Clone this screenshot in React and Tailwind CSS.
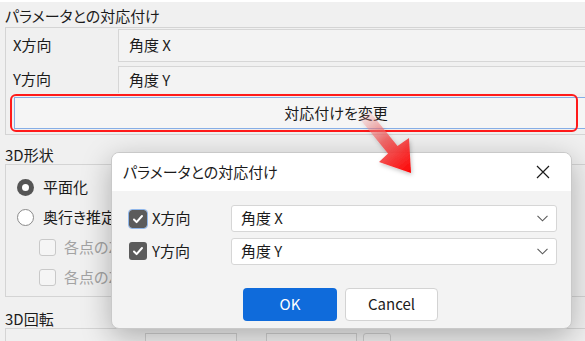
import React from "react";

const FONT = "font-['Noto_Sans_CJK_JP','Noto_Sans',sans-serif]";

function Check({ focus }) {
  return (
    <div className={`w-[18px] h-[18px] rounded-[3px] bg-[#5b5b5b] flex items-center justify-center ${focus ? "outline outline-1 outline-[#8fb6ea]" : ""}`}>
      <svg width="12" height="12" viewBox="0 0 12 12" fill="none" stroke="#fff" strokeWidth="2" strokeLinecap="round" strokeLinejoin="round">
        <path d="M2 6.5l2.6 2.6L10 3" />
      </svg>
    </div>
  );
}

function Select({ value }) {
  return (
    <div className="flex-1 h-[27px] bg-white border border-[#d6d6d6] rounded-[3px] flex items-center justify-between pl-[9px] pr-[8px]">
      <span>{value}</span>
      <svg width="11" height="7" viewBox="0 0 11 7" fill="none" stroke="#5a5a5a" strokeWidth="1.1">
        <path d="M0.5 0.8l5 5 5-5" />
      </svg>
    </div>
  );
}

export default function App() {
  return (
    <div className={`relative w-[585px] h-[341px] overflow-hidden bg-[#f0f0f0] text-[15px] text-[#1b1b1b] ${FONT} [font-feature-settings:'palt']`}>
      <div className="h-[2px] bg-white" />

      {/* パラメータとの対応付け */}
      <div className="pl-[5px] pt-[4px] leading-[20px]">パラメータとの対応付け</div>
      <div className="ml-[5px] mt-[1px] w-[660px] border border-[#d4d4d4] pb-[2px]">
        <div className="flex h-[33px] mt-[1px]">
          <div className="w-[112px] pl-[7px] flex items-center">X方向</div>
          <div className="flex-1 border border-[#d6d6d6] bg-[#f3f3f3] pl-[10px] flex items-center">角度 X</div>
        </div>
        <div className="flex h-[27px] mt-[4px]">
          <div className="w-[112px] pl-[7px] flex items-center">Y方向</div>
          <div className="flex-1 border border-[#d6d6d6] border-b-0 bg-[#f3f3f3] pl-[10px] flex items-center">角度 Y</div>
        </div>
        <div className="ml-[8px] mt-[4px] mb-[3px] w-[644px] h-[32px] border border-[#86aee6] bg-[#f5f5f5] flex items-center justify-center">
          対応付けを変更
        </div>
      </div>
      {/* red highlight */}
      <div className="absolute left-[10px] top-[94px] w-[568px] h-[38px] border-2 border-[#ff1a1a] rounded-[6px]" />

      {/* 3D形状 */}
      <div className="pl-[5px] mt-[11px] leading-[18px]">3D形状</div>
      <div className="ml-[5px] w-[600px] border border-[#d4d4d4] pt-[7px] pb-[4px]">
        <div className="h-[30px] flex items-center pl-[11px] gap-[9px]">
          <div className="w-[17px] h-[17px] rounded-full bg-[#555] flex items-center justify-center">
            <div className="w-[7px] h-[7px] rounded-full bg-white" />
          </div>
          <span>平面化</span>
        </div>
        <div className="h-[30px] flex items-center pl-[11px] gap-[9px]">
          <div className="w-[17px] h-[17px] rounded-full bg-white border border-[#8a8a8a]" />
          <span className="w-[68px] overflow-hidden whitespace-nowrap">奥行き推定</span>
        </div>
        <div className="h-[30px] flex items-center pl-[33px] gap-[8px] text-[#a3a3a3]">
          <div className="w-[17px] h-[17px] rounded-[3px] border border-[#c9c9c9] bg-[#f5f5f5]" />
          <span className="w-[47px] overflow-hidden whitespace-nowrap">各点のZ座標</span>
        </div>
        <div className="h-[30px] flex items-center pl-[33px] gap-[8px] text-[#a3a3a3]">
          <div className="w-[17px] h-[17px] rounded-[3px] border border-[#c9c9c9] bg-[#f5f5f5]" />
          <span className="w-[47px] overflow-hidden whitespace-nowrap">各点のZ座標</span>
        </div>
      </div>

      {/* 3D回転 */}
      <div className="pl-[5px] mt-[13px] leading-[18px]">3D回転</div>
      <div className="ml-[5px] w-[600px] h-[40px] border border-[#d4d4d4] pt-[4px] pl-[139px] flex">
        <div className="w-[92px] h-[30px] border border-[#d0d0d0] bg-[#f3f3f3]" />
        <div className="w-[91px] h-[30px] border border-[#d0d0d0] bg-[#f3f3f3] ml-[29px]" />
        <div className="w-[28px] h-[30px] border border-[#d0d0d0] rounded-[3px] bg-[#f3f3f3] ml-[6px]" />
      </div>

      {/* dialog */}
      <div className="absolute left-[111px] top-[152px] w-[461px] h-[177px] rounded-[8px] border border-[#c9c9c9] bg-[#f3f3f3] overflow-hidden shadow-[0_8px_30px_rgba(0,0,0,0.28)]">
        <div className="h-[38px] bg-white flex items-center justify-between pl-[11px] pr-[21px]">
          <span>パラメータとの対応付け</span>
          <svg width="14" height="14" viewBox="0 0 14 14" stroke="#1b1b1b" strokeWidth="1.2">
            <path d="M1 1l12 12M13 1L1 13" />
          </svg>
        </div>
        <div className="pt-[14px] pl-[17px] pr-[14px]">
          <div className="flex items-center h-[27px]">
            <div className="w-[102px] flex items-center gap-[5px]">
              <Check focus />
              <span>X方向</span>
            </div>
            <Select value="角度 X" />
          </div>
          <div className="flex items-center h-[28px] mt-[5px]">
            <div className="w-[102px] flex items-center gap-[5px]">
              <Check />
              <span>Y方向</span>
            </div>
            <Select value="角度 Y" />
          </div>
        </div>
        <div className="mt-[23px] flex justify-center gap-[8px] pr-[2px]">
          <div className="w-[94px] h-[33px] rounded-[4px] bg-[#0f6bdb] text-white flex items-center justify-center">OK</div>
          <div className="w-[93px] h-[33px] rounded-[4px] bg-white border border-[#d3d3d3] flex items-center justify-center">Cancel</div>
        </div>
      </div>

      {/* red arrow */}
      <svg className="absolute left-0 top-0 pointer-events-none" width="585" height="341" viewBox="0 0 585 341">
        <defs>
          <linearGradient id="ag" gradientUnits="userSpaceOnUse" x1="364" y1="114" x2="411" y2="173">
            <stop offset="0" stopColor="#f7a0a0" stopOpacity="0.15" />
            <stop offset="0.45" stopColor="#ef5555" stopOpacity="0.85" />
            <stop offset="1" stopColor="#ff0000" />
          </linearGradient>
          <filter id="sh" x="-20%" y="-20%" width="140%" height="140%">
            <feDropShadow dx="1" dy="2" stdDeviation="2" floodColor="#000" floodOpacity="0.25" />
          </filter>
        </defs>
        <polygon
          filter="url(#sh)"
          fill="url(#ag)"
          points="359.5,118.7 369.5,111.3 397.5,146 409,138 411,173 379,162 388,153.5"
        />
      </svg>
    </div>
  );
}
